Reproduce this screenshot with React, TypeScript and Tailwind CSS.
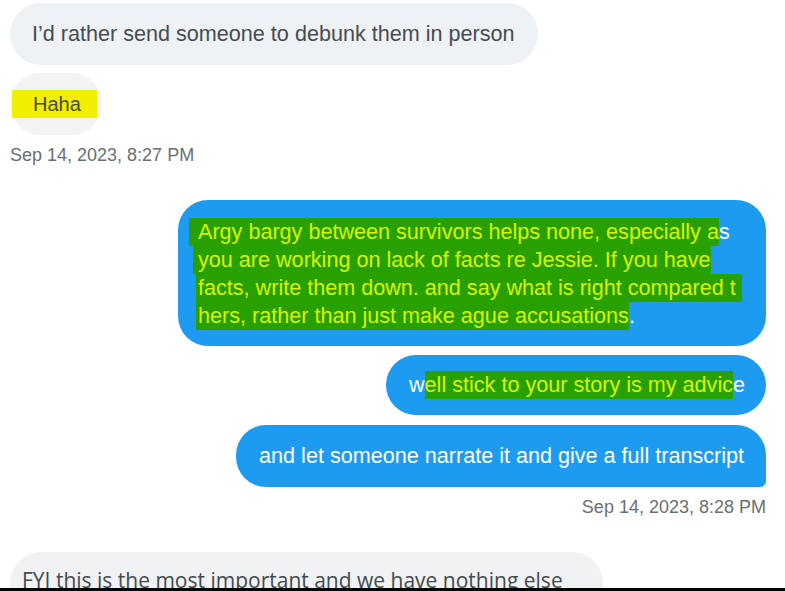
const sans = { fontFamily: '"Liberation Sans", Arial, sans-serif' }

function Mark({ children, className = '' }: { children: React.ReactNode; className?: string }) {
  return <span className={`inline-block h-[28px] bg-[#28a000] leading-[28px] text-[#d6f500] ${className}`}>{children}</span>
}

export default function App() {
  return (
    <div className="flex h-[591px] w-[785px] flex-col overflow-hidden bg-white" style={sans}>
      <div className="flex flex-1 flex-col overflow-hidden pl-[10px] pr-[19px] pt-[3px] [&>*]:shrink-0">
        {/* incoming */}
        <div className="flex h-[62px] items-center self-start rounded-[31px] bg-[#eff2f4] pl-[22px] pr-[23px] text-[21.6px] text-[#474c50]">
          I’d rather send someone to debunk them in person
        </div>
        <div className="mt-[8px] flex h-[62px] w-[92px] items-center self-start rounded-[31px] bg-[#f1f3f5] pl-[2px]">
          <span className="inline-block h-[28px] w-[85px] bg-[#f2ee00] pl-[21px] text-[20px] leading-[28px] text-[#4a4d3a]">
            Haha
          </span>
        </div>
        <div className="mt-[10px] text-[18px] leading-[20px] text-[#6b6f72]">Sep 14, 2023, 8:27 PM</div>

        {/* outgoing */}
        <div className="mt-[35px] flex w-[588px] flex-col self-end rounded-[30px] bg-[#1d9bf0] pb-[16px] pl-[11px] pr-[10px] pt-[18px] text-[21.6px] text-white">
          <div className="flex h-[28px] whitespace-nowrap leading-[28px]">
            <Mark className="pl-[9px]">Argy bargy between survivors helps none, especially a</Mark>
            <span>s</span>
          </div>
          <div className="flex h-[28px] whitespace-nowrap leading-[28px]">
            <Mark className="ml-[4px] pl-[5px]">you are working on lack of facts re Jessie. If you have</Mark>
          </div>
          <div className="flex h-[28px] whitespace-nowrap leading-[28px]">
            <Mark className="ml-[7px] pl-[2px] pr-[6px]">facts, write them down. and say what is right compared t</Mark>
          </div>
          <div className="flex h-[28px] whitespace-nowrap leading-[28px]">
            <Mark className="ml-[7px] pl-[2px]">hers, rather than just make ague accusations</Mark>
            <span>.</span>
          </div>
        </div>

        <div className="mt-[9px] flex h-[60px] items-center self-end whitespace-nowrap rounded-[30px] bg-[#1d9bf0] pl-[23px] pr-[21px] text-[21.6px] text-white">
          <span>w</span>
          <Mark className="h-[26px] leading-[26px]">ell stick to your story is my advic</Mark>
          <span>e</span>
        </div>

        <div className="mt-[10px] flex h-[62px] items-center self-end whitespace-nowrap rounded-[30px] rounded-br-[6px] bg-[#1d9bf0] pl-[23px] pr-[22px] text-[21.6px] text-white">
          and let someone narrate it and give a full transcript
        </div>
        <div className="mt-[10px] self-end text-[18px] leading-[20px] text-[#6b6f72]">Sep 14, 2023, 8:28 PM</div>

        {/* incoming, cut off by the bar below */}
        <div
          className="mt-[35px] flex h-[62px] items-start self-start whitespace-nowrap rounded-[31px] bg-[#f0f2f4] pl-[12px] pr-[40px] pt-[14px] text-[21px] leading-[29px] text-[#454a4e]"
          style={{ fontFamily: '"Open Sans", "Liberation Sans", sans-serif' }}
        >
          FYI this is the most important and we have nothing else
        </div>
      </div>
      <div className="h-[3px] shrink-0 bg-black" />
    </div>
  )
}
